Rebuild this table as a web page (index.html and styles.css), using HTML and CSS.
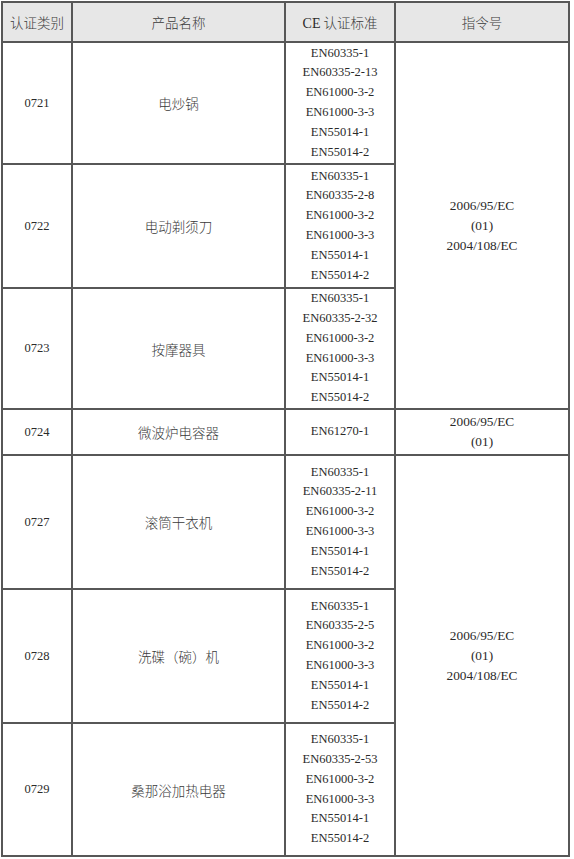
FILE: index.html
```html
<!DOCTYPE html>
<html lang="zh">
<head>
<meta charset="utf-8">
<link rel="stylesheet" href="styles.css">
</head>
<body>
<table class="cert">
  <colgroup>
    <col class="c1"><col class="c2"><col class="c3"><col class="c4">
  </colgroup>
  <thead>
    <tr class="head">
      <th>认证类别</th>
      <th>产品名称</th>
      <th><span class="lat">CE</span> 认证标准</th>
      <th>指令号</th>
    </tr>
  </thead>
  <tbody>
    <tr class="r1">
      <td class="num">0721</td>
      <td class="zh">电炒锅</td>
      <td class="std"><div>EN60335-1</div><div>EN60335-2-13</div><div>EN61000-3-2</div><div>EN61000-3-3</div><div>EN55014-1</div><div>EN55014-2</div></td>
      <td class="dir" rowspan="3"><div>2006/95/EC</div><div>(01)</div><div>2004/108/EC</div></td>
    </tr>
    <tr class="r2">
      <td class="num">0722</td>
      <td class="zh">电动剃须刀</td>
      <td class="std"><div>EN60335-1</div><div>EN60335-2-8</div><div>EN61000-3-2</div><div>EN61000-3-3</div><div>EN55014-1</div><div>EN55014-2</div></td>
    </tr>
    <tr class="r3">
      <td class="num">0723</td>
      <td class="zh">按摩器具</td>
      <td class="std"><div>EN60335-1</div><div>EN60335-2-32</div><div>EN61000-3-2</div><div>EN61000-3-3</div><div>EN55014-1</div><div>EN55014-2</div></td>
    </tr>
    <tr class="r4">
      <td class="num">0724</td>
      <td class="zh">微波炉电容器</td>
      <td class="std"><div>EN61270-1</div></td>
      <td class="dir"><div>2006/95/EC</div><div>(01)</div></td>
    </tr>
    <tr class="r5">
      <td class="num">0727</td>
      <td class="zh">滚筒干衣机</td>
      <td class="std"><div>EN60335-1</div><div>EN60335-2-11</div><div>EN61000-3-2</div><div>EN61000-3-3</div><div>EN55014-1</div><div>EN55014-2</div></td>
      <td class="dir" rowspan="3"><div>2006/95/EC</div><div>(01)</div><div>2004/108/EC</div></td>
    </tr>
    <tr class="r6">
      <td class="num">0728</td>
      <td class="zh">洗碟（碗）机</td>
      <td class="std"><div>EN60335-1</div><div>EN60335-2-5</div><div>EN61000-3-2</div><div>EN61000-3-3</div><div>EN55014-1</div><div>EN55014-2</div></td>
    </tr>
    <tr class="r7">
      <td class="num">0729</td>
      <td class="zh">桑那浴加热电器</td>
      <td class="std"><div>EN60335-1</div><div>EN60335-2-53</div><div>EN61000-3-2</div><div>EN61000-3-3</div><div>EN55014-1</div><div>EN55014-2</div></td>
    </tr>
  </tbody>
</table>
</body>
</html>
```
FILE: styles.css
```css
html, body {
  margin: 0;
  padding: 0;
  background: #ffffff;
}
body {
  padding: 1px 0 0 1px;
  color: #2a2a2a;
  font-family: "Liberation Serif", "Noto Sans CJK SC", serif;
}
.cert {
  border-collapse: collapse;
  table-layout: fixed;
  width: 569px;
}
.c1 { width: 70px; }
.c2 { width: 213px; }
.c3 { width: 110px; }
.c4 { width: 174px; }
.cert th, .cert td {
  border: 2px solid #575757;
  padding: 0;
  text-align: center;
  vertical-align: middle;
}
.cert th {
  background: #e7e7e7;
  font-family: "Noto Sans CJK SC", sans-serif;
  font-weight: 300;
  font-size: 13.5px;
  color: #3a3a3a;
  height: 38px;
}
.lat {
  font-family: "Liberation Serif", serif;
  font-weight: normal;
  font-size: 14px;
  color: #2a2a2a;
}
.num {
  font-size: 12.5px;
}
.zh {
  font-family: "Noto Sans CJK SC", sans-serif;
  font-weight: 300;
  font-size: 13.5px;
  color: #3a3a3a;
}
.std {
  font-size: 12.5px;
  line-height: 19.8px;
}
.dir {
  font-size: 13.3px;
  line-height: 20px;
}
.r1 td { height: 120px; }
.r2 td { height: 122px; }
.r3 td { height: 119px; }
.r4 td { height: 44px; }
.r5 td { height: 132px; }
.r6 td { height: 132px; }
.r7 td { height: 131px; }
```
